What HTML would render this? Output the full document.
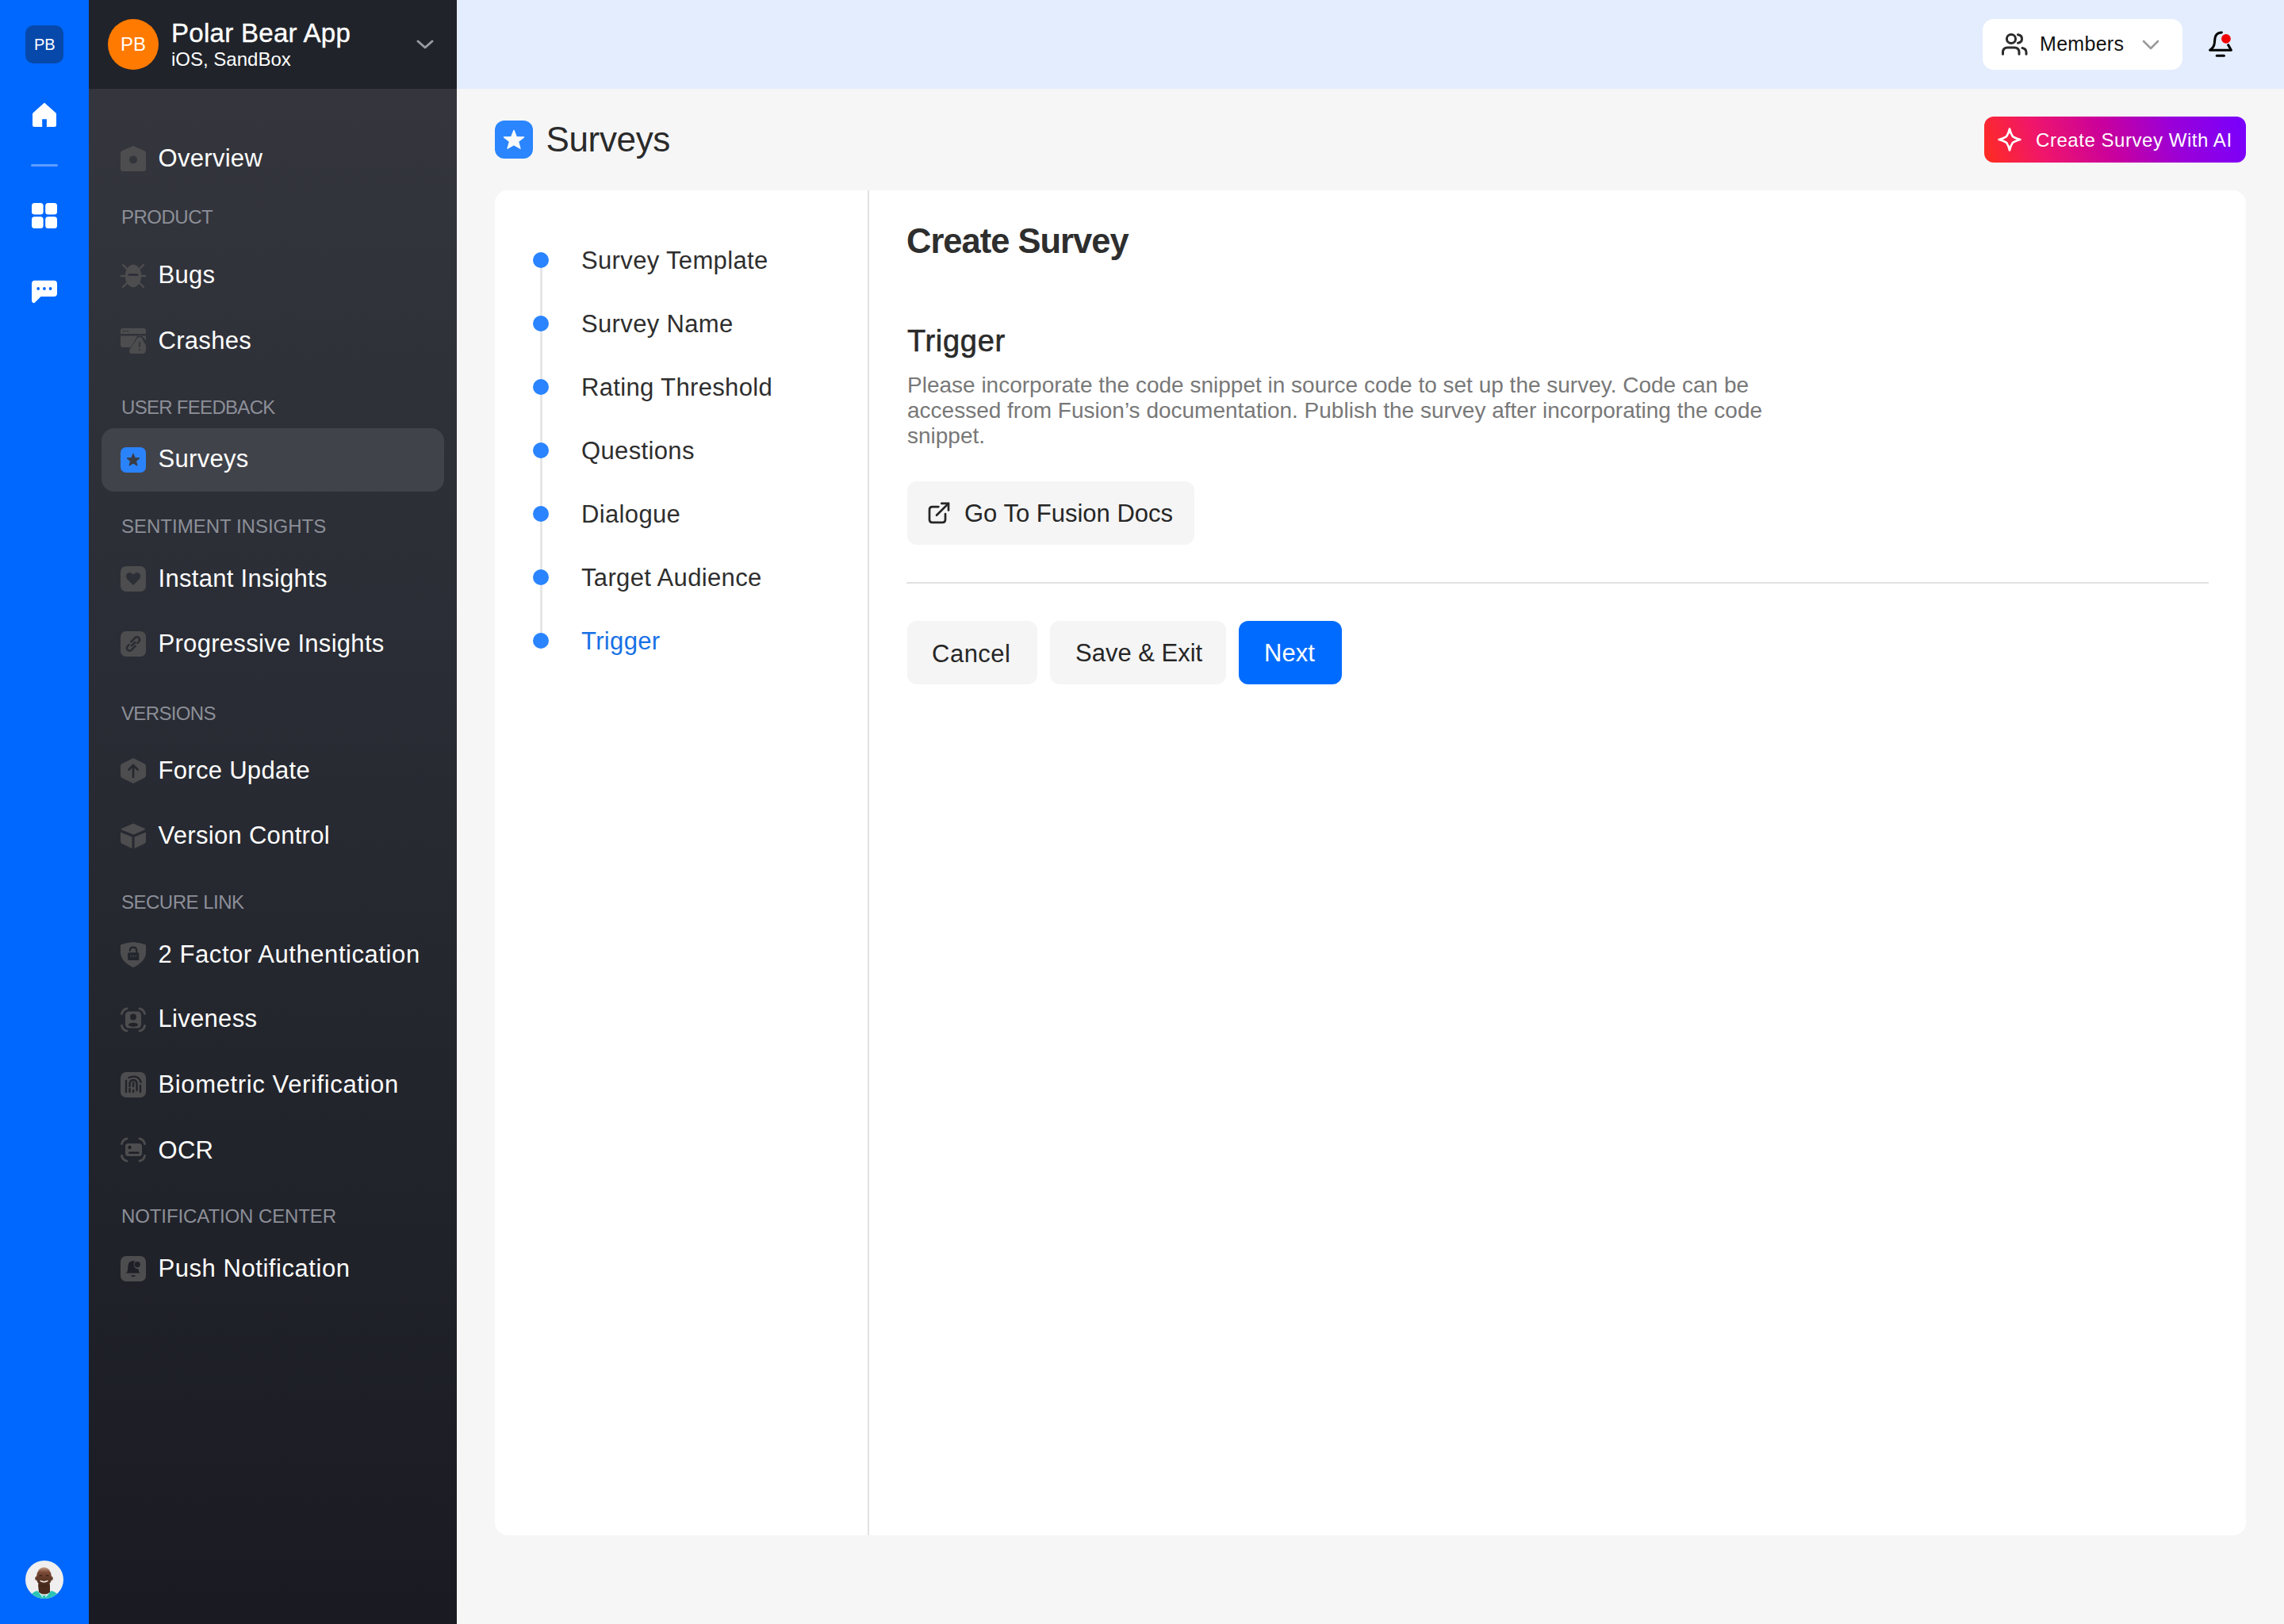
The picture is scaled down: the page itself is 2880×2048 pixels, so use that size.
<!DOCTYPE html>
<html><head><meta charset="utf-8">
<style>
*{margin:0;padding:0;box-sizing:border-box}
html,body{width:2880px;height:2048px;overflow:hidden;background:#f6f6f6;font-family:"Liberation Sans",sans-serif}
.a{position:absolute}
.t{position:absolute;line-height:1;white-space:nowrap}
#rail{left:0;top:0;width:112px;height:2048px;background:#0068ff}
#side{left:112px;top:0;width:464px;height:2048px;background:linear-gradient(180deg,#36373e 0%,#2a2d35 40%,#1a1b22 100%)}
#shead{left:112px;top:0;width:464px;height:112px;background:#20232a}
#top{left:576px;top:0;width:2304px;height:112px;background:#e3edfd}
.nav{color:#fff;font-size:31px;letter-spacing:0.3px}
.sec{color:#8c8f98;font-size:24px}
.ic{position:absolute;left:152px;width:32px;height:32px}
#card{left:624px;top:240px;width:2208px;height:1696px;background:#fff;border-radius:16px}
.step{color:#2e2e2e;font-size:31px;left:733px;letter-spacing:0.35px}
.dot{position:absolute;left:672px;width:20px;height:20px;border-radius:50%;background:#2a84ff}
.btn{position:absolute;background:#f5f5f5;border-radius:12px}
</style></head><body>
<div id="rail" class="a"></div>
<div id="side" class="a"></div>
<div id="shead" class="a"></div>
<div id="top" class="a"></div>

<!-- rail -->
<div class="a" style="left:32px;top:32px;width:48px;height:48px;border-radius:10px;background:#0649ab"></div>
<div class="t" style="left:43px;top:46px;font-size:20px;color:#fff">PB</div>
<svg class="a" style="left:40px;top:128px" width="32" height="32" viewBox="0 0 32 32"><path d="M16 1.5 L30.5 14.5 Q31 15 31 16 V29.5 Q31 32 28.5 32 H18.9 V22.2 H13.2 V32 H3.5 Q1 32 1 29.5 V16 Q1 15 1.5 14.5 Z" fill="#fff"/></svg>
<div class="a" style="left:39px;top:207px;width:34px;height:3px;background:#5c9dff;border-radius:2px"></div>
<svg class="a" style="left:40px;top:256px" width="32" height="32" viewBox="0 0 32 32"><rect x="0" y="0" width="14.6" height="14.6" rx="3.5" fill="#fff"/><rect x="17.2" y="0" width="14.8" height="14.6" rx="3.5" fill="#fff"/><rect x="0" y="17.2" width="14.6" height="14.8" rx="3.5" fill="#fff"/><rect x="17.2" y="17.2" width="14.8" height="14.8" rx="3.5" fill="#fff"/></svg>
<svg class="a" style="left:40px;top:352px" width="32" height="32" viewBox="0 0 32 32"><path d="M4 1.7 H28 Q32 1.7 32 5.7 V18 Q32 22 28 22 H11.5 L4 29.5 Q2.5 31 1.2 29.5 Q0 28.5 0 27 V5.7 Q0 1.7 4 1.7 Z" fill="#fff"/><circle cx="8.2" cy="12" r="1.9" fill="#0066ff"/><circle cx="15.9" cy="12" r="1.9" fill="#0066ff"/><circle cx="23.6" cy="12" r="1.9" fill="#0066ff"/></svg>
<svg class="a" style="left:32px;top:1968px" width="48" height="48" viewBox="0 0 48 48"><defs><clipPath id="av"><circle cx="24" cy="24" r="24"/></clipPath><linearGradient id="fg" x1="0" y1="0" x2="0" y2="1"><stop offset="0" stop-color="#c49a86"/><stop offset="0.25" stop-color="#7a4a35"/><stop offset="1" stop-color="#3e2418"/></linearGradient></defs><g clip-path="url(#av)"><rect width="48" height="48" fill="#efefef"/><path d="M4 48 Q8 39 16 38 L22 44 L26 44 L32 38 Q40 39 44 48 Z" fill="#2cc4b4"/><path d="M15.5 37.5 L22 46 M32 37.5 L25.5 46" stroke="#f2fbfa" stroke-width="1.2"/><path d="M16 30 L17 40 Q24 45 31 40 L31 30 Z" fill="#4a2a1c"/><ellipse cx="13.8" cy="22.5" rx="1.6" ry="2.6" fill="#6a3f2c"/><ellipse cx="33.2" cy="22.5" rx="1.6" ry="2.6" fill="#6a3f2c"/><ellipse cx="23.5" cy="21" rx="9.6" ry="12.4" fill="url(#fg)"/><path d="M17.5 19.2 Q19.5 18.2 21.2 19.4 M25.8 19.4 Q27.5 18.2 29.5 19.2" stroke="#2a1810" stroke-width="1.1" fill="none"/><path d="M18.5 25.5 Q23.5 29 28.5 25.5 Q23.5 27.5 18.5 25.5 Z" fill="#f2e8e0" stroke="#f2e8e0" stroke-width="1"/></g></svg>

<!-- sidebar header -->
<div class="a" style="left:136px;top:24px;width:64px;height:64px;border-radius:50%;background:#ff7a00"></div>
<div class="t" style="left:152px;top:44px;font-size:24px;color:#fff">PB</div>
<div class="t" style="left:216px;top:24.7px;font-size:33px;color:#fff;letter-spacing:0.3px;-webkit-text-stroke:0.4px #fff">Polar Bear App</div>
<div class="t" style="left:216px;top:63px;font-size:24px;color:#fff">iOS, SandBox</div>
<svg class="a" style="left:524px;top:48px" width="24" height="16" viewBox="0 0 24 16"><path d="M3 4 L12 12 L21 4" stroke="#9a9ba0" stroke-width="3" fill="none" stroke-linecap="round" stroke-linejoin="round"/></svg>

<!-- nav -->
<div class="a" style="left:128px;top:540px;width:432px;height:80px;border-radius:16px;background:#41434b"></div>

<svg class="ic" style="top:184px" viewBox="0 0 32 32"><defs><mask id="m1"><rect width="32" height="32" fill="#fff"/><circle cx="16" cy="17.4" r="5" fill="#000"/></mask></defs><path d="M16 0 L30 6 Q32 7 32 9 V29 Q32 32 29 32 H3 Q0 32 0 29 V9 Q0 7 2 6 Z" fill="#4d4d4f" mask="url(#m1)"/></svg>
<div class="t nav" style="left:199.5px;top:184px">Overview</div>
<div class="t sec" style="letter-spacing:-0.5px;left:153px;top:262px">PRODUCT</div>

<svg class="ic" style="top:332px" viewBox="0 0 32 32"><g stroke="#4d4d4f" stroke-width="2.4" stroke-linecap="round"><line x1="3" y1="2" x2="8" y2="7"/><line x1="29" y1="2" x2="24" y2="7"/><line x1="3" y1="30" x2="8" y2="25"/><line x1="29" y1="30" x2="24" y2="25"/><line x1="0.5" y1="16" x2="6" y2="16"/><line x1="26" y1="16" x2="31.5" y2="16"/></g><ellipse cx="16" cy="16" rx="10.2" ry="14.2" fill="#4d4d4f"/><rect x="9.5" y="13" width="13" height="3" rx="1.5" fill="#303139"/></svg>
<div class="t nav" style="left:199.5px;top:331px">Bugs</div>

<svg class="ic" style="top:414px" viewBox="0 0 32 32"><path d="M0 3 Q0 0 3 0 H29 Q32 0 32 3 V7 H0 Z" fill="#4d4d4f"/><circle cx="3.5" cy="3.4" r="0.9" fill="#2e3037"/><circle cx="6.3" cy="3.4" r="0.9" fill="#2e3037"/><circle cx="9.1" cy="3.4" r="0.9" fill="#2e3037"/><path d="M0 9.5 H32 V15 L27 10 Q24 7 21 10 L13 24 H3 Q0 24 0 21 Z" fill="#4d4d4f"/><path d="M21 12.5 Q24 9 27 12.5 L32 22 Q33 32 28 32 H14 Q10 32 11.5 27 Z" fill="#4d4d4f"/><rect x="23.2" y="17" width="1.6" height="7" rx="0.8" fill="#2e3037"/><circle cx="24" cy="27" r="1" fill="#2e3037"/></svg>
<div class="t nav" style="left:199.5px;top:414px">Crashes</div>
<div class="t sec" style="letter-spacing:-0.7px;left:153px;top:502px">USER FEEDBACK</div>

<svg class="ic" style="top:564px" viewBox="0 0 32 32"><rect width="32" height="32" rx="7" fill="#2a83fb"/><path d="M16 8 L18.2 13.4 L24 13.8 L19.6 17.6 L21 23.2 L16 20.2 L11 23.2 L12.4 17.6 L8 13.8 L13.8 13.4 Z" fill="#3a3c44" stroke="#3a3c44" stroke-width="1" stroke-linejoin="round"/></svg>
<div class="t nav" style="left:199.5px;top:563px">Surveys</div>
<div class="t sec" style="left:153px;top:652px">SENTIMENT INSIGHTS</div>

<svg class="ic" style="top:714px" viewBox="0 0 32 32"><rect width="32" height="32" rx="7" fill="#4d4d4f"/><path d="M16 24 L8.5 16.5 Q5.5 13 8 9.5 Q11.5 6 16 10.5 Q20.5 6 24 9.5 Q26.5 13 23.5 16.5 Z" fill="#2d2f37"/></svg>
<div class="t nav" style="left:199.5px;top:714px">Instant Insights</div>

<svg class="ic" style="top:796px" viewBox="0 0 32 32"><rect width="32" height="32" rx="7" fill="#4d4d4f"/><g transform="rotate(45 16 16)" fill="none" stroke="#2a2c33" stroke-width="2.6" stroke-linecap="round"><path d="M12.2 16 V9 A3.4 3.4 0 0 1 19 9 V11.5"/><path d="M19.8 16 V23 A3.4 3.4 0 0 1 13 23 V20.5"/><path d="M16.2 13 Q16.2 15.5 16.2 19"/></g></svg>
<div class="t nav" style="left:199.5px;top:796px">Progressive Insights</div>
<div class="t sec" style="letter-spacing:-0.65px;left:153px;top:888px">VERSIONS</div>

<svg class="ic" style="top:956px" viewBox="0 0 32 32"><path d="M16 0 L30 7 Q32 8 32 10 V22 Q32 24 30 25 L16 32 L2 25 Q0 24 0 22 V10 Q0 8 2 7 Z" fill="#4d4d4f"/><g fill="none" stroke="#26282f" stroke-width="2.6" stroke-linecap="round" stroke-linejoin="round"><path d="M16 24 V9"/><path d="M10.5 14.5 L16 9 L21.5 14.5"/></g></svg>
<div class="t nav" style="left:199.5px;top:956px">Force Update</div>

<svg class="ic" style="top:1038px" viewBox="0 0 32 32"><path d="M16 0.5 L30.5 6.8 Q32 7.6 30.5 8.6 L16.5 14.5 L1.5 8.6 Q0 7.6 1.5 6.8 Z" fill="#4d4d4f"/><path d="M0 11.5 L14.5 17.5 V32 L2 26 Q0 25 0 23 Z" fill="#4d4d4f"/><path d="M32 11.5 L17.5 17.5 V32 L30 26 Q32 25 32 23 Z" fill="#4d4d4f"/></svg>
<div class="t nav" style="left:199.5px;top:1038px">Version Control</div>
<div class="t sec" style="letter-spacing:-0.5px;left:153px;top:1126px">SECURE LINK</div>

<svg class="ic" style="top:1188px" viewBox="0 0 32 32"><path d="M16 0 Q25 0.5 32 3.5 V14 Q31 25 16 32 Q1 25 0 14 V3.5 Q7 0.5 16 0 Z" fill="#4d4d4f"/><path d="M11.8 10.8 Q12 6.6 16 6.6 Q20.2 6.6 20.2 10.8 V13.5" fill="none" stroke="#23252c" stroke-width="2.2" stroke-linecap="round"/><rect x="9.2" y="13.2" width="14" height="9.8" rx="1.5" fill="#23252c"/><circle cx="13.2" cy="17.7" r="0.9" fill="#4d4d4f"/><circle cx="16.2" cy="17.7" r="0.9" fill="#4d4d4f"/><circle cx="19.2" cy="17.7" r="0.9" fill="#4d4d4f"/></svg>
<div class="t nav" style="letter-spacing:0.57px;left:199.5px;top:1188px">2 Factor Authentication</div>

<svg class="ic" style="top:1270px" viewBox="0 0 32 32"><g fill="none" stroke="#4d4d4f" stroke-width="2.8" stroke-linecap="round"><path d="M1.5 8.5 Q2.5 3 8 1.8"/><path d="M24 1.8 Q29.5 3 30.5 8.5"/><path d="M1.5 23.5 Q2.5 29 8 30.2"/><path d="M24 30.2 Q29.5 29 30.5 23.5"/></g><rect x="6" y="5.5" width="20" height="21" rx="4.5" fill="#4d4d4f"/><circle cx="16" cy="12.5" r="3.9" fill="#222329"/><ellipse cx="16" cy="22.3" rx="6" ry="2.5" fill="#222329"/></svg>
<div class="t nav" style="left:199.5px;top:1269px">Liveness</div>

<svg class="ic" style="top:1352px" viewBox="0 0 32 32"><rect width="32" height="32" rx="7" fill="#4d4d4f"/><g fill="none" stroke="#222329" stroke-width="2.4" stroke-linecap="round"><path d="M10.5 7 Q16 4.5 21 6.5 Q24.5 8.5 25.5 12.5"/><path d="M11.5 18 V15 Q11.5 10 16 10 Q20.5 10 20.5 15 V23"/><path d="M16 13.5 V18"/><path d="M16 23 V25"/><path d="M7 11 V25"/><path d="M11.5 21 V25"/><path d="M25 17 V25"/></g></svg>
<div class="t nav" style="letter-spacing:0.63px;left:199.5px;top:1352px">Biometric Verification</div>

<svg class="ic" style="top:1434px" viewBox="0 0 32 32"><g fill="none" stroke="#4d4d4f" stroke-width="2.8" stroke-linecap="round"><path d="M1.5 8.5 Q2.5 3 8 1.8"/><path d="M24 1.8 Q29.5 3 30.5 8.5"/><path d="M1.5 23.5 Q2.5 29 8 30.2"/><path d="M24 30.2 Q29.5 29 30.5 23.5"/></g><rect x="6" y="8" width="21" height="16" rx="3.5" fill="#4d4d4f"/><circle cx="11.5" cy="13" r="2.2" fill="#1f2027"/><rect x="10" y="18.5" width="13.5" height="2.6" rx="1.3" fill="#1f2027"/></svg>
<div class="t nav" style="left:199.5px;top:1435px">OCR</div>
<div class="t sec" style="letter-spacing:-0.1px;left:153px;top:1522px">NOTIFICATION CENTER</div>

<svg class="ic" style="top:1584px" viewBox="0 0 32 32"><rect width="32" height="32" rx="7" fill="#4d4d4f"/><path d="M16.5 6 Q10 6 9.5 12 L9 18 Q8.5 21 6.5 21.5 H24.5 Q23 21 22.8 18 L22.5 16.2 Q18 16.5 16.8 12 Q16 8.5 18.2 6.2 Q17.5 6 16.5 6 Z" fill="#1e1f27"/><circle cx="21.2" cy="10.6" r="3.6" fill="#1e1f27"/><path d="M13 24.2 H19 Q18 26.2 16 26.2 Q14 26.2 13 24.2 Z" fill="#1e1f27"/></svg>
<div class="t nav" style="letter-spacing:0.55px;left:199.5px;top:1584px">Push Notification</div>

<!-- top bar -->
<div class="a" style="left:2500px;top:24px;width:252px;height:64px;border-radius:14px;background:#fff"></div>
<svg class="a" style="left:2522px;top:40px" width="36" height="32" viewBox="0 0 36 32"><g fill="none" stroke="#2b2b2b" stroke-width="3" stroke-linecap="round"><circle cx="14" cy="9" r="5.6"/><path d="M3.5 28.2 V26 Q3.5 20 9.5 20 H18 Q24 20 24 26 V28.2"/><path d="M22.5 3.8 Q27.5 4.5 27.5 9 Q27.5 13.5 22.5 14.2"/><path d="M28 20.5 Q33 21.5 33 26 V28.2"/></g></svg>
<div class="t" style="left:2572px;top:43px;font-size:25px;color:#111;letter-spacing:0.3px">Members</div>
<svg class="a" style="left:2700px;top:48px" width="24" height="16" viewBox="0 0 24 16"><path d="M3 4 L12 13 L21 4" stroke="#9a9a9a" stroke-width="2.6" fill="none" stroke-linecap="round" stroke-linejoin="round"/></svg>
<svg class="a" style="left:2784px;top:38px" width="34" height="36" viewBox="0 0 34 36"><g fill="none" stroke="#000" stroke-width="3" stroke-linecap="round" stroke-linejoin="round"><path d="M17.4 3 Q9.6 3.2 8.8 11.5 L8.3 16.5 Q7.6 22 2.6 25.2 H29.4 L25.6 18.6"/><path d="M11.3 32.3 H20.4"/></g><circle cx="22.9" cy="10.8" r="7.1" fill="#e3edfd"/><circle cx="22.9" cy="10.8" r="5.9" fill="#f00000"/></svg>

<!-- page title -->
<svg class="a" style="left:624px;top:152px" width="48" height="48" viewBox="0 0 48 48"><rect width="48" height="48" rx="12" fill="#2a85fe"/><path d="M24 12.3 L27.2 20.6 L36.6 20.9 L29.6 26.6 L32 35.3 L24 30.6 L16 35.3 L18.4 26.6 L11.4 20.9 L20.8 20.6 Z" fill="#fafafa" stroke="#fafafa" stroke-width="1.3" stroke-linejoin="round"/></svg>
<div class="t" style="left:688.5px;top:153.8px;font-size:44px;color:#2a2a2a;letter-spacing:-0.35px">Surveys</div>

<!-- AI button -->
<div class="a" style="left:2502px;top:147px;width:330px;height:58px;border-radius:12px;background:linear-gradient(70deg,#ff2d1e 0%,#f0166a 22%,#c8009e 48%,#9a00d8 72%,#7700ff 100%)"></div>
<svg class="a" style="left:2517px;top:159px" width="34" height="34" viewBox="0 0 34 34"><path d="M17 3.6 Q18 8.5 20.9 13.1 Q25.5 16 30.4 17 Q25.5 18 20.9 20.9 Q18 25.5 17 30.4 Q16 25.5 13.1 20.9 Q8.5 18 3.6 17 Q8.5 16 13.1 13.1 Q16 8.5 17 3.6 Z" fill="none" stroke="#fff" stroke-width="2.7" stroke-linejoin="round"/></svg>
<div class="t" style="left:2567px;top:164.5px;font-size:24px;color:#fff;letter-spacing:0.55px">Create Survey With AI</div>

<!-- card -->
<div id="card" class="a"></div>
<div class="a" style="left:1094px;top:240px;width:2px;height:1696px;background:#e2e2e2"></div>

<!-- stepper -->
<div class="a" style="left:680.5px;top:328px;width:3px;height:480px;background:#e6e6e6"></div>
<div class="dot" style="top:318px"></div>
<div class="dot" style="top:398px"></div>
<div class="dot" style="top:478px"></div>
<div class="dot" style="top:558px"></div>
<div class="dot" style="top:638px"></div>
<div class="dot" style="top:718px"></div>
<div class="dot" style="top:798px"></div>
<div class="t step" style="top:313px">Survey Template</div>
<div class="t step" style="top:393px">Survey Name</div>
<div class="t step" style="top:473px">Rating Threshold</div>
<div class="t step" style="top:553px">Questions</div>
<div class="t step" style="top:633px">Dialogue</div>
<div class="t step" style="top:713px">Target Audience</div>
<div class="t step" style="top:793px;color:#1771e6">Trigger</div>

<!-- content -->
<div class="t" style="left:1143px;top:282.5px;font-size:43.5px;font-weight:bold;color:#2e2e2e;letter-spacing:-1px">Create Survey</div>
<div class="t" style="left:1144px;top:411px;font-size:38px;color:#2a2a2a;-webkit-text-stroke:0.6px #2a2a2a;letter-spacing:0.7px">Trigger</div>
<div class="a" style="left:1144px;top:470px;width:1100px;font-size:28px;line-height:32px;color:#787878">Please incorporate the code snippet in source code to set up the survey. Code can be accessed from Fusion’s documentation. Publish the survey after incorporating the code snippet.</div>

<div class="btn" style="left:1144px;top:607px;width:362px;height:80px"></div>
<svg class="a" style="left:1166px;top:630px" width="34" height="34" viewBox="0 0 34 34"><g fill="none" stroke="#262626" stroke-width="2.7" stroke-linecap="round" stroke-linejoin="round"><path d="M17.4 9.1 H9.6 Q6 9.1 6 12.7 V25.3 Q6 28.9 9.6 28.9 H22.4 Q26 28.9 26 25.3 V18"/><path d="M15 19.8 L30 4.9"/><path d="M21.3 4.9 H30 V13.4"/></g></svg>
<div class="t" style="left:1216px;top:632px;font-size:31px;color:#262626">Go To Fusion Docs</div>

<div class="a" style="left:1143px;top:734px;width:1642px;height:2px;background:#e2e2e2"></div>

<div class="btn" style="left:1144px;top:783px;width:164px;height:80px"></div>
<div class="t" style="left:1175px;top:808.5px;font-size:31px;color:#262626;letter-spacing:0.5px">Cancel</div>
<div class="btn" style="left:1324px;top:783px;width:222px;height:80px"></div>
<div class="t" style="left:1356px;top:808px;font-size:31px;color:#262626">Save &amp; Exit</div>
<div class="a" style="left:1562px;top:783px;width:130px;height:80px;border-radius:12px;background:#006cff"></div>
<div class="t" style="left:1594px;top:808px;font-size:31px;color:#fff">Next</div>

</body></html>
